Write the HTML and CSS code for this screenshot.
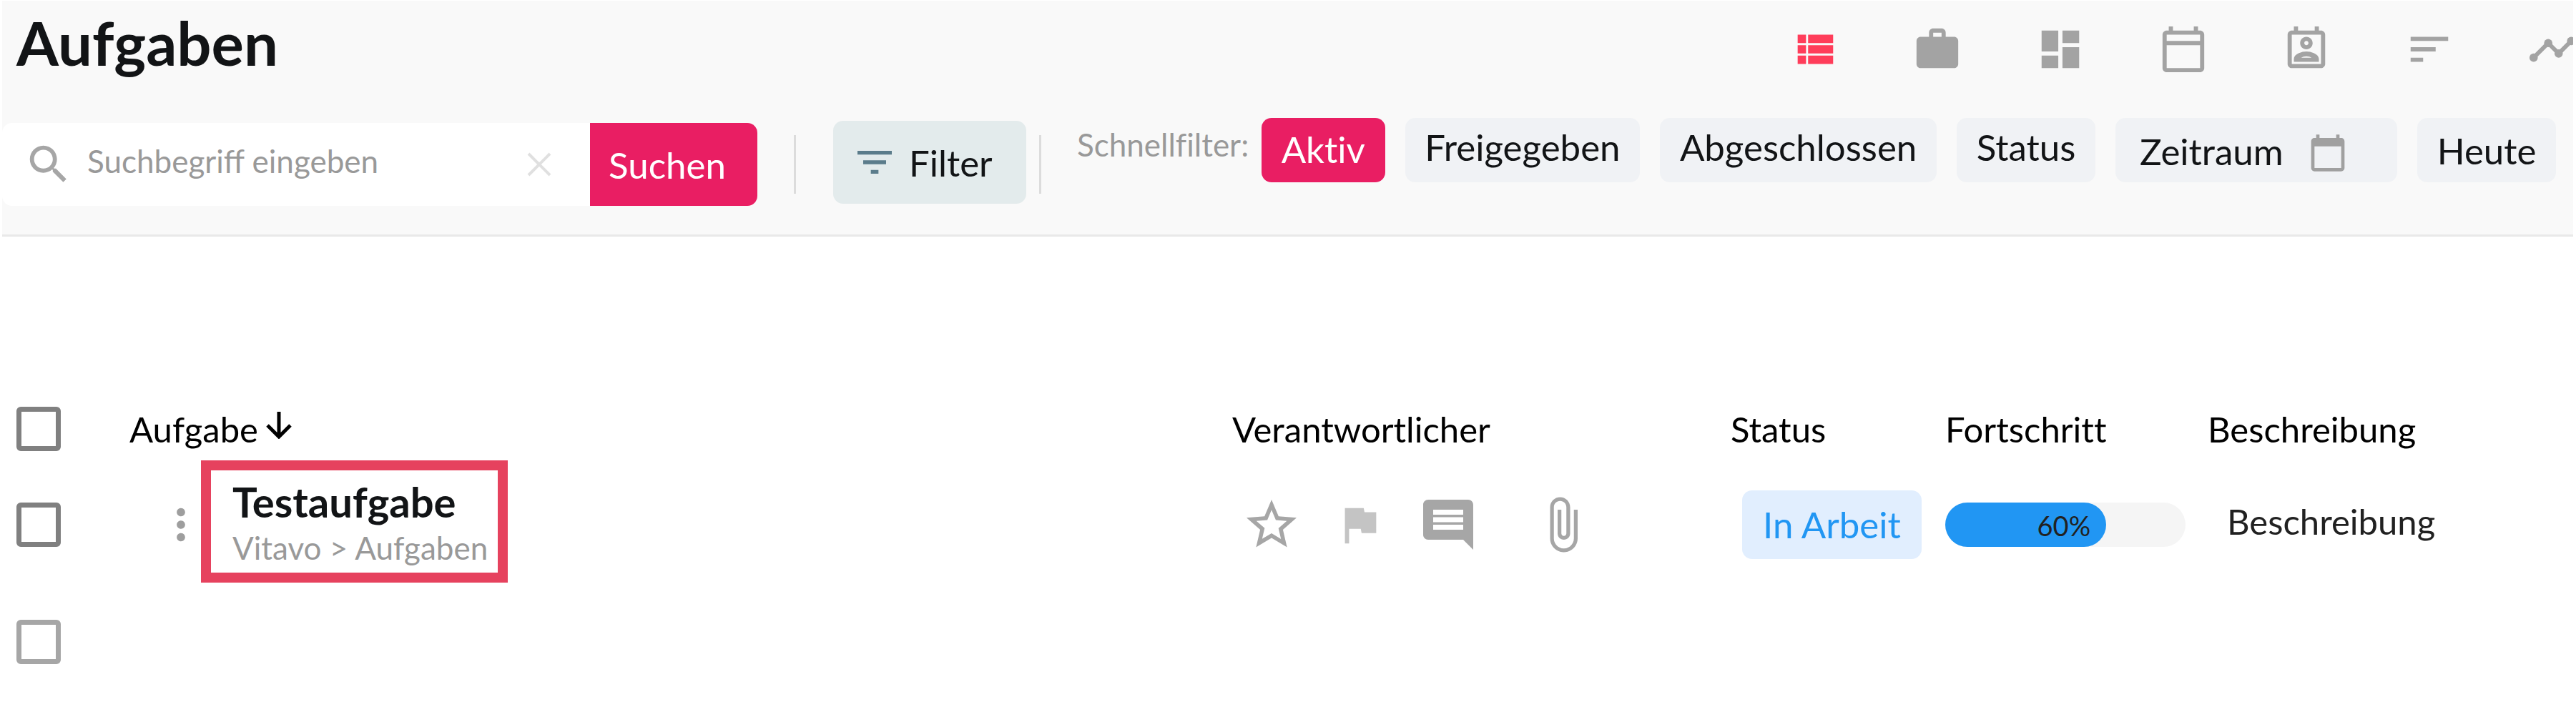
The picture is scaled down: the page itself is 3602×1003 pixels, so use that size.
FILE: index.html
```html
<!DOCTYPE html>
<html lang="de">
  <head>
    <meta charset="UTF-8" />
    <meta name="viewport" content="width=device-width, initial-scale=1.0" />
    <title>Aufgaben</title>
    <link rel="stylesheet" href="styles.css">
  </head>
  <body>
    <!-- Header -->
    <header class="header">
      <div class="title-row">
        <h1>Aufgaben</h1>
        <nav class="views">
          <a href="#" class="view active" aria-label="Liste">
            <svg class="icon" viewBox="0 0 24 24"><path d="M4 14h4v-4H4v4zm0 5h4v-4H4v4zM4 9h4V5H4v4zm5 5h12v-4H9v4zm0 5h12v-4H9v4zM9 5v4h12V5H9z"/></svg>
          </a>
          <a href="#" class="view" aria-label="Projekte">
            <svg class="icon" viewBox="0 0 24 24"><path d="M20 6h-4V4c0-1.11-.89-2-2-2h-4c-1.11 0-2 .89-2 2v2H4c-1.11 0-1.99.89-1.99 2L2 19c0 1.11.89 2 2 2h16c1.11 0 2-.89 2-2V8c0-1.11-.89-2-2-2zm-6 0h-4V4h4v2z"/></svg>
          </a>
          <a href="#" class="view" aria-label="Board">
            <svg class="icon" viewBox="0 0 24 24"><path d="M3 13h8V3H3v10zm0 8h8v-6H3v6zm10 0h8V11h-8v10zm0-18v6h8V3h-8z"/></svg>
          </a>
          <a href="#" class="view" aria-label="Kalender">
            <svg class="icon" viewBox="0 0 24 24"><path d="M20 3h-1V1h-2v2H7V1H5v2H4c-1.1 0-2 .9-2 2v16c0 1.1.9 2 2 2h16c1.1 0 2-.9 2-2V5c0-1.1-.9-2-2-2zm0 2v3H4V5h16zM4 21V10h16v11H4z"/></svg>
          </a>
          <a href="#" class="view" aria-label="Personen">
            <svg class="icon" viewBox="0 0 24 24"><path d="M19 3h-1V1h-2v2H8V1H6v2H5c-1.11 0-2 .9-2 2v14c0 1.1.89 2 2 2h14c1.1 0 2-.9 2-2V5c0-1.1-.9-2-2-2zm0 16H5V5h14v14z"/><path d="M12 12c1.65 0 3-1.35 3-3s-1.35-3-3-3-3 1.35-3 3 1.35 3 3 3zm0-4c.55 0 1 .45 1 1s-.45 1-1 1-1-.45-1-1 .45-1 1-1zm6 8.58c0-2.5-3.97-3.58-6-3.58s-6 1.08-6 3.58V18h12v-1.42zM9.5 16c.6-.4 1.6-.7 2.5-.7s1.9.3 2.5.7h-5z"/></svg>
          </a>
          <a href="#" class="view" aria-label="Gantt">
            <svg class="icon" viewBox="0 0 24 24"><path d="M3 18h6v-2H3v2zM3 6v2h18V6H3zm0 7h12v-2H3v2z"/></svg>
          </a>
          <a href="#" class="view" aria-label="Verlauf">
            <svg class="icon" viewBox="0 0 24 24"><path d="M3 16L10 9l5 5 6-6" fill="none" stroke="currentColor" stroke-width="2"/><circle cx="3" cy="16" r="2"/><circle cx="10" cy="9" r="2"/><circle cx="15" cy="14" r="2"/><circle cx="21" cy="8" r="2"/></svg>
          </a>
        </nav>
      </div>
      <div class="filter-row">
        <form class="search">
          <svg class="icon" viewBox="0 0 24 24"><path d="M15.5 14h-.79l-.28-.27C15.41 12.59 16 11.11 16 9.5 16 5.91 13.09 3 9.5 3S3 5.91 3 9.5 5.91 16 9.5 16c1.61 0 3.09-.59 4.23-1.57l.27.28v.79l5 4.99L20.49 19l-4.99-5zm-6 0C7.01 14 5 11.99 5 9.5S7.01 5 9.5 5 14 7.01 14 9.5 11.99 14 9.5 14z"/></svg>
          <input type="text" class="search-input" aria-label="Suche" placeholder="Suchbegriff eingeben">
          <button type="button" class="clear-btn" aria-label="Leeren">
            <svg viewBox="0 0 34 34"><path d="M2 2l30 30M32 2L2 32"/></svg>
          </button>
          <button type="button" class="search-btn">Suchen</button>
        </form>
        <span class="divider"></span>
        <button class="filter-btn">
          <svg viewBox="0 0 24 24"><path d="M10 18h4v-2h-4v2zM3 6v2h18V6H3zm3 7h12v-2H6v2z"/></svg>
          Filter
        </button>
        <span class="divider"></span>
        <span class="quick-label">Schnellfilter:</span>
        <div class="chips">
          <button class="chip chip-active">Aktiv</button>
          <button class="chip">Freigegeben</button>
          <button class="chip">Abgeschlossen</button>
          <button class="chip">Status</button>
          <button class="chip chip-date">
            Zeitraum
            <svg viewBox="0 0 24 24"><path d="M20 3h-1V1h-2v2H7V1H5v2H4c-1.1 0-2 .9-2 2v16c0 1.1.9 2 2 2h16c1.1 0 2-.9 2-2V5c0-1.1-.9-2-2-2zm0 18H4V8h16v13z"/></svg>
          </button>
          <button class="chip chip-today">Heute</button>
        </div>
      </div>
    </header>
    <!-- Task table -->
    <main>
      <table class="tasks">
        <thead>
          <tr>
            <th class="col-check"><input type="checkbox" class="check" aria-label="Alle auswählen"></th>
            <th>
              <div class="sort">
                Aufgabe
                <svg viewBox="0 0 38 38"><path d="M19 0v35M3 19l16 16 16-16"/></svg>
              </div>
            </th>
            <th class="col-owner">Verantwortlicher</th>
            <th class="col-status">Status</th>
            <th class="col-progress">Fortschritt</th>
            <th class="col-text">Beschreibung</th>
          </tr>
        </thead>
        <tbody>
          <tr class="task">
            <td><input type="checkbox" class="check" aria-label="Testaufgabe auswählen"></td>
            <td>
              <div class="task-cell">
                <button class="more-btn" aria-label="Mehr">
                  <svg class="icon" viewBox="0 0 24 24"><path d="M12 8c1.1 0 2-.9 2-2s-.9-2-2-2-2 .9-2 2 .9 2 2 2zm0 2c-1.1 0-2 .9-2 2s.9 2 2 2 2-.9 2-2-.9-2-2-2zm0 6c-1.1 0-2 .9-2 2s.9 2 2 2 2-.9 2-2-.9-2-2-2z"/></svg>
                </button>
                <div class="task-name">
                  <a href="#" class="task-title">Testaufgabe</a>
                  <div class="task-path">Vitavo &gt; Aufgaben</div>
                </div>
              </div>
            </td>
            <td>
              <div class="actions">
                <button aria-label="Favorit">
                  <svg class="icon-lg" viewBox="0 0 24 24"><path d="M22 9.24l-7.19-.62L12 2 9.19 8.63 2 9.24l5.46 4.73L5.82 21 12 17.27 18.18 21l-1.63-7.03L22 9.24zM12 15.4l-3.76 2.27 1-4.28-3.32-2.88 4.38-.38L12 6.1l1.71 4.04 4.38.38-3.32 2.88 1 4.28L12 15.4z"/></svg>
                </button>
                <button class="flag" aria-label="Markieren">
                  <svg class="icon" viewBox="0 0 24 24"><path d="M14.4 6L14 4H5v17h2v-7h5.6l.4 2h7V6z"/></svg>
                </button>
                <button aria-label="Kommentare">
                  <svg class="icon-lg" viewBox="0 0 24 24"><path d="M21.99 4c0-1.1-.89-2-1.99-2H4c-1.1 0-2 .9-2 2v12c0 1.1.9 2 2 2h14l4 4-.01-18zM18 14H6v-2h12v2zm0-3H6V9h12v2zm0-3H6V6h12v2z"/></svg>
                </button>
                <button class="attach" aria-label="Anhänge">
                  <svg class="icon-lg" viewBox="0 0 24 24"><path d="M16.5 6v11.5c0 2.21-1.79 4-4 4s-4-1.79-4-4V5c0-1.38 1.12-2.5 2.5-2.5s2.5 1.12 2.5 2.5v10.5c0 .55-.45 1-1 1s-1-.45-1-1V6H10v9.5c0 1.38 1.12 2.5 2.5 2.5s2.5-1.12 2.5-2.5V5c0-2.21-1.79-4-4-4S7 2.79 7 5v12.5c0 3.04 2.46 5.5 5.5 5.5s5.5-2.46 5.5-5.5V6h-1.5z"/></svg>
                </button>
              </div>
            </td>
            <td><span class="badge">In Arbeit</span></td>
            <td>
              <div class="progress">
                <div class="progress-fill">60%</div>
              </div>
            </td>
            <td class="description">Beschreibung</td>
          </tr>
          <tr class="empty">
            <td><input type="checkbox" class="check check-light" aria-label="Aufgabe auswählen"></td>
            <td colspan="5"></td>
          </tr>
        </tbody>
      </table>
    </main>
  </body>
</html>
```
FILE: styles.css
```css
* {
  margin: 0;
  padding: 0;
  box-sizing: border-box;
}
body {
  font-family: Lato, sans-serif;
  font-size: 51px;
  font-variant-ligatures: none;
  background-color: #fff;
  color: #000;
  overflow-x: hidden;
}
button {
  font: inherit;
  color: inherit;
  background: none;
  border: none;
  cursor: pointer;
}
svg {
  display: block;
  flex-shrink: 0;
  fill: currentColor;
}
.icon {
  width: 70px;
  height: 70px;
}
.icon-lg {
  width: 84px;
  height: 84px;
}
/* Header */
.header {
  margin: 1px 4px 0 3px;
  padding-bottom: 40px;
  background-color: #f9f9f9;
  border-bottom: 3px solid #e9e9e9;
}
.title-row {
  display: flex;
  justify-content: space-between;
  align-items: flex-start;
  padding-left: 20px;
  margin-bottom: 48px;
  overflow: hidden;
}
h1 {
  font-size: 85px;
  font-weight: 700;
  line-height: 116px;
  color: #121416;
}
.views {
  display: flex;
  gap: 102px;
  padding-top: 33px;
  margin-right: -6px;
}
.view {
  color: #a3a3a3;
}
.view.active {
  color: #ff3d5a;
}
/* Filter row */
.filter-row {
  display: flex;
  align-items: flex-start;
}
.search {
  display: flex;
  align-items: center;
  width: 1056px;
  height: 116px;
  margin-top: 7px;
  padding-left: 30px;
  background-color: #fff;
  border-radius: 14px;
  color: #a6a6a6;
  overflow: hidden;
}
.search-input {
  flex: 1;
  min-width: 0;
  height: 100%;
  margin-left: 19px;
  padding-bottom: 10px;
  border: none;
  outline: none;
  background: none;
  font-family: inherit;
  font-size: 44px;
}
.search-input::placeholder {
  color: #999;
}
.clear-btn svg {
  width: 34px;
  height: 34px;
  margin-right: 54px;
  fill: none;
  stroke: #e0e0e0;
  stroke-width: 4;
}
.search-btn {
  width: 234px;
  height: 100%;
  padding-right: 18px;
  background-color: #e91e63;
  color: #fff;
}
.divider {
  width: 3px;
  height: 82px;
  margin-top: 24px;
  background-color: #dcdcdc;
}
.search + .divider {
  margin: 24px 52px 0 51px;
}
.filter-btn {
  display: flex;
  align-items: center;
  gap: 16px;
  width: 270px;
  height: 116px;
  margin: 4px 18px 0 0;
  padding-left: 26px;
  background-color: #e3ebec;
  border-radius: 14px;
  color: #121416;
}
.filter-btn svg {
  width: 64px;
  height: 64px;
  color: #5b7c8b;
}
.quick-label {
  width: 258px;
  margin-left: 50px;
  font-size: 44px;
  line-height: 74px;
  color: #999;
}
.chips {
  flex: 1;
  display: flex;
  gap: 28px;
  padding-right: 24px;
}
.chip {
  flex: auto;
  height: 90px;
  padding: 0 20px 10px;
  background-color: #f0f2f5;
  border-radius: 14px;
  color: #121416;
  white-space: nowrap;
}
.chip-active {
  padding-bottom: 4px;
  background-color: #e91e63;
  color: #fff;
}
.chip-date {
  display: flex;
  align-items: center;
  gap: 34px;
  padding: 2px 54px 0 34px;
}
.chip-date svg {
  width: 56px;
  height: 56px;
  margin-top: 6px;
  color: #a0a0a0;
}
.chip-today {
  padding-bottom: 0;
}
/* Task table */
.tasks {
  width: 100%;
  margin-top: 225px;
  table-layout: fixed;
  border-collapse: collapse;
  font-size: 49px;
}
th {
  height: 88px;
  text-align: left;
  font-weight: 400;
}
.col-check {
  width: 181px;
}
.col-owner {
  width: 697px;
}
.col-status {
  width: 300px;
}
.col-progress {
  width: 367px;
}
.col-text {
  width: 515px;
}
.task td {
  height: 180px;
}
.empty td {
  height: 148px;
}
.check {
  appearance: none;
  display: block;
  width: 62px;
  height: 62px;
  margin-left: 23px;
  border: 7px solid #808080;
  border-radius: 6px;
}
.check-light {
  border-color: #a6a6a6;
}
.sort {
  display: flex;
  align-items: center;
  gap: 10px;
}
.sort svg {
  width: 38px;
  height: 38px;
  margin-bottom: 10px;
  fill: none;
  stroke: #000;
  stroke-width: 5;
}
.task-cell {
  display: flex;
  align-items: center;
  height: 180px;
  padding-left: 37px;
}
.more-btn {
  margin-right: -7px;
  color: #9e9e9e;
}
.task-name {
  align-self: flex-start;
  height: 171px;
  padding: 10px 14px 0 30px;
  border: 14px solid #e6425e;
}
.task-title {
  display: block;
  font-size: 58px;
  font-weight: 700;
  line-height: 68px;
  color: #121416;
  text-decoration: none;
}
.task-path {
  font-size: 44px;
  line-height: 60px;
  color: #999;
}
.actions {
  display: flex;
  align-items: center;
  padding-left: 13px;
  color: #a6a6a6;
}
.flag {
  margin: 0 47px 0 46px;
  color: #c4c4c4;
}
.attach {
  margin-left: 76px;
}
.badge {
  display: inline-block;
  margin-left: 16px;
  padding: 0 29px;
  border-radius: 14px;
  background-color: #e1eefe;
  color: #2196f3;
  font-size: 51px;
  line-height: 96px;
}
.progress {
  width: 336px;
  height: 62px;
  background-color: #f5f5f5;
  border-radius: 31px;
}
.progress-fill {
  width: 67%;
  height: 62px;
  padding-right: 22px;
  border-radius: 31px;
  background-color: #2196f3;
  color: #212121;
  font-size: 38px;
  line-height: 64px;
  text-align: right;
}
.tasks .description {
  padding: 0 0 10px 27px;
  color: #212121;
}
```
